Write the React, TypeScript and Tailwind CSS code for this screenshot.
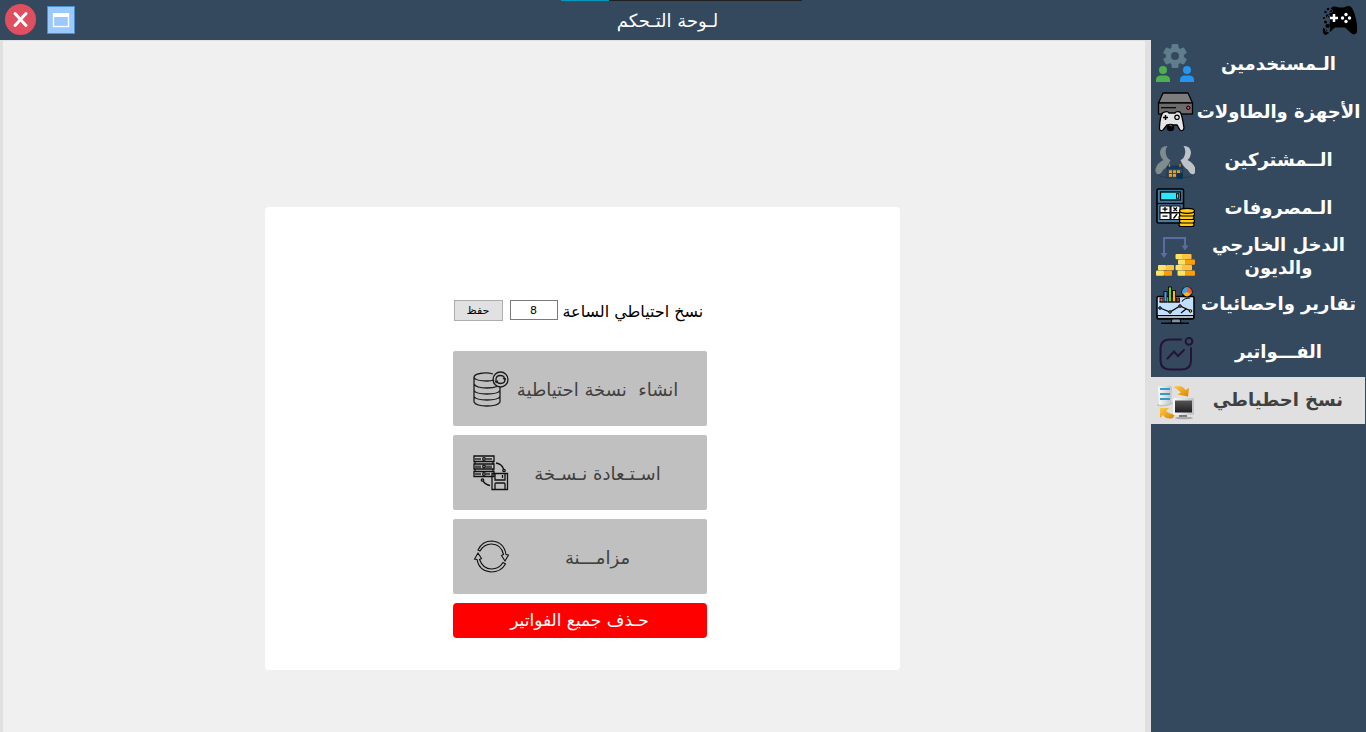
import type { ReactNode } from 'react';

function CloseIcon() {
  return (
    <svg className="size-8" viewBox="0 0 32 32" aria-hidden="true">
      <circle cx="15.5" cy="15.5" r="15.5" fill="#e04f5f" />
      <path d="M10 9.500 21 21.500M21 9.500 10 21.500" stroke="#fff" strokeWidth="3" strokeLinecap="round" />
    </svg>
  );
}

function WindowIcon() {
  return (
    <svg className="size-7" viewBox="0 0 28 28" aria-hidden="true">
      <rect x="0.5" y="0.5" width="27" height="27" fill="#99c9ff" stroke="#4a90d0" />
      <rect x="6.5" y="8" width="15" height="12.5" fill="none" stroke="#fff" strokeWidth="1.4" />
      <rect x="6" y="7" width="16" height="4" fill="#fff" />
    </svg>
  );
}

function GamepadIcon() {
  return (
    <svg className="h-8 w-9" viewBox="0 0 36 32" aria-hidden="true">
      <path d="M9 4C12 1 15 3 17 3.500H21C24 3 27 0 30 4C33 9 36 20 35 28C34 31 31 31 29 29L23 23.500H13L8 28C7 25 9 23 7 21C9 18 7 15 8 12C6 10 9 7 9 4Z" fill="#000" />
      <g fill="#000"><circle cx="6" cy="5" r="1.300" /><circle cx="3.500" cy="8" r="1.200" /><circle cx="5.500" cy="12" r="1.700" /><circle cx="2" cy="14" r="1" /><circle cx="3.500" cy="18" r="1.500" /><circle cx="5.500" cy="22" r="2" /><path d="M1 24 4 25 7 29 4 31Q0 31 1 24" /></g>
      <g fill="none" stroke="#34495e" strokeWidth="0.8"><circle cx="9" cy="7" r="1.600" /><circle cx="7" cy="13" r="1.600" /><circle cx="5" cy="26" r="1.700" /></g>
      <path d="M12 10V18M8 14H16" stroke="#fff" strokeWidth="2.500" />
      <g fill="#fff"><circle cx="24" cy="10.500" r="1.700" /><circle cx="24" cy="17.500" r="1.700" /><circle cx="20.500" cy="14" r="1.700" /><circle cx="27.500" cy="14" r="1.700" /></g>
    </svg>
  );
}

function Icon({ children }: { children: ReactNode }) {
  return (
    <svg className="size-10 shrink-0" viewBox="0 0 40 40" fill="none" aria-hidden="true">
      {children}
    </svg>
  );
}

const usersIcon = (
  <Icon>
    <g fill="#607d8b">
      <rect x="16.500" y="0" width="7" height="24" rx="1.500" />
      <rect x="16.500" y="0" width="7" height="24" rx="1.500" transform="rotate(60 20 12)" />
      <rect x="16.500" y="0" width="7" height="24" rx="1.500" transform="rotate(120 20 12)" />
      <circle cx="20" cy="12" r="9" />
    </g>
    <circle cx="20" cy="12" r="4" fill="#34495e" />
    <g fill="#4caf50"><circle cx="8" cy="26" r="4" /><path d="M1 38V36Q1 31.500 6 31.500H10Q15 31.500 15 36V38Z" /></g>
    <g fill="#2196f3"><circle cx="32" cy="26" r="4" /><path d="M25 38V36Q25 31.500 30 31.500H34Q39 31.500 39 36V38Z" /></g>
  </Icon>
);

const devicesIcon = (
  <Icon>
    <path d="M8 1H33L37.500 11H3.500Z" fill="#7d7d7d" stroke="#000" strokeWidth="1.300" strokeLinejoin="round" />
    <rect x="3.500" y="11" width="34" height="11" fill="#6b6b6b" stroke="#000" strokeWidth="1.300" />
    <path d="M6 15.700H21" stroke="#000" strokeWidth="1.200" />
    <circle cx="33.300" cy="15.800" r="1.700" fill="#e83a62" stroke="#000" />
    <path d="M10 20Q13 19 14 21H20Q21 19 25 20Q27 22 29 36Q28 40 25 38L22 33H12L8 38Q4 40 4.500 35Q5 24 8 20.500Z" fill="#e6e6e6" stroke="#000" strokeWidth="1.300" />
    <path d="M10.500 23V28M8 25.500H13" stroke="#000" strokeWidth="1.500" />
    <circle cx="22" cy="25.300" r="2.200" stroke="#000" strokeWidth="1.200" />
    <circle cx="15.500" cy="35.500" r="3.800" fill="#050505" />
    <path d="M14.500 33.500Q16 32 17 34.500" stroke="#777" />
  </Icon>
);

const personPath = 'M12.500 6Q6 5.500 5 12Q5 17 8.500 20Q2 23 0.500 29Q0 33 3 34.500Q6 34 8 30Q13 27 15.500 20Q12 19 11 14Q10 9 12.500 6Z';

const membersIcon = (
  <Icon>
    <path d={personPath} fill="#7f8c8d" />
    <path d={personPath} fill="#bdc3c7" transform="translate(41 0) scale(-1 1)" />
    <path d="M3 35Q6 37.500 12 37.500H30Q36 37.500 38 35" stroke="#263b52" />
    <rect x="12" y="26" width="15.500" height="12" rx="1" fill="#34495e" stroke="#173a55" />
    <rect x="12" y="26" width="15.500" height="3" fill="#0f3c5c" />
    <path d="M14.500 24V27M25 24V27" stroke="#c97d1b" strokeWidth="1.300" />
    <g fill="#f39c12"><rect x="14" y="30.300" width="3" height="2.800" /><rect x="18" y="30.300" width="3" height="2.800" /><rect x="22" y="30.300" width="3" height="2.800" /><rect x="14" y="34" width="3" height="2.800" /><rect x="18" y="34" width="3" height="2.800" /></g>
    <rect x="21.500" y="33" width="6.500" height="6" rx="1" fill="#063554" />
  </Icon>
);

const expensesIcon = (
  <Icon>
    <rect x="2" y="1" width="26.500" height="34" rx="1.500" fill="#4779a0" stroke="#000" strokeWidth="1.600" />
    <rect x="5.500" y="4" width="20" height="8" fill="#2ee6ff" stroke="#000" strokeWidth="1.300" />
    <rect x="21.500" y="5.700" width="2.300" height="4.500" stroke="#000" />
    <path d="M2 15.500H28" stroke="#000" strokeWidth="1.500" />
    <g fill="#fff" stroke="#000"><rect x="5" y="18" width="10" height="6.500" /><rect x="16" y="18" width="9" height="6.500" /><rect x="5" y="25" width="10" height="6.500" /><rect x="16" y="25" width="9" height="6.500" /></g>
    <path d="M10 19V23.500M7.500 21.200H12.500M18.500 19.500 22 23M22 19.500 18.500 23M7.500 28.200H12.500M22 26 18.500 30.500" stroke="#000" strokeWidth="1.300" />
    <g fill="#ffcb13" stroke="#000" strokeWidth="1.200">
      <rect x="24" y="34.500" width="15" height="4" rx="2" /><rect x="24.500" y="31" width="15" height="4" rx="2" /><rect x="24" y="27.500" width="15" height="4" rx="2" /><rect x="24.500" y="24" width="15" height="4" rx="2" /><ellipse cx="32" cy="22.800" rx="7.500" ry="2.500" />
    </g>
  </Icon>
);

const incomeIcon = (
  <Icon>
    <path d="M9 20V2H30V12" stroke="#596da0" strokeWidth="2" />
    <path d="M5.500 17H12.500L9 22ZM26.500 9.500H33.500L30 14.500Z" fill="#596da0" />
    <g fill="#ffe365"><rect x="20.500" y="18" width="9" height="5.200" rx="1" /><rect x="23" y="23.500" width="8" height="5.200" rx="1" /><rect x="20.500" y="29" width="8" height="5.200" rx="1" /><rect x="22.500" y="34.500" width="8" height="5.200" rx="1" /><rect x="3" y="29" width="8" height="5.200" rx="1" /><rect x="1" y="34.500" width="8" height="5.200" rx="1" /></g>
    <g fill="#ffc344"><rect x="27" y="18" width="9.500" height="5.200" rx="1" /><rect x="11" y="29" width="8" height="5.200" rx="1" /><rect x="27" y="29" width="10" height="5.200" rx="1" /></g>
    <g fill="#ff9d08"><rect x="30" y="23.500" width="10" height="5.200" rx="1" /><rect x="30" y="34.500" width="10" height="5.200" rx="1" /><rect x="9" y="34.500" width="8" height="5.200" rx="1" /></g>
  </Icon>
);

const reportsIcon = (
  <Icon>
    <rect x="2" y="12.500" width="37" height="22.500" rx="1.500" fill="#c1dfff" stroke="#000" strokeWidth="1.500" />
    <path d="M2.500 31.500H38.500V34.500H2.500Z" fill="#a9b6c0" stroke="#000" />
    <g stroke="#000" strokeWidth="0.8"><rect x="5" y="14" width="3" height="4" fill="#e8603c" /><rect x="9" y="7.500" width="3" height="10.500" fill="#4a9bd8" /><rect x="13.500" y="3" width="3" height="15" fill="#74c82a" /><rect x="17.500" y="6.500" width="3" height="11.500" fill="#ffb51b" /><rect x="21.500" y="14" width="3" height="4" fill="#a83c2c" /></g>
    <path d="M4.500 18H25M27 17.500Q29 14 35 14" stroke="#111" strokeWidth="1.200" />
    <circle cx="32" cy="8" r="5" fill="#ffb521" stroke="#000" strokeWidth="1.200" />
    <path d="M32 8V3A5 5 0 0 1 36.500 10Z" fill="#f25932" /><path d="M32 8V3A5 5 0 0 0 27.500 10Z" fill="#40a4df" />
    <path d="M5 24 15 28 25 22 36 27M26 29 31 25" stroke="#000" strokeWidth="1.200" />
    <g stroke="#000"><circle cx="5" cy="24" r="1.300" fill="#3b97d3" /><circle cx="15" cy="28" r="1.300" fill="#80b72f" /><circle cx="25" cy="22" r="1.300" fill="#ff7043" /><circle cx="35.500" cy="27" r="1.300" fill="#ffc02e" /></g>
    <path d="M17 35H25L26 39H16Z" fill="#8193a0" stroke="#000" /><path d="M6 39.300H34" stroke="#000" strokeWidth="1.500" />
  </Icon>
);

const invoicesIcon = (
  <Icon>
    <path d="M26 7.500H15Q5.500 7.500 5.500 17V28Q5.500 37.500 15 37.500H27Q36 37.500 36 28V16" stroke="#251535" strokeWidth="2" strokeLinecap="round" />
    <circle cx="34" cy="9.300" r="3.400" stroke="#251535" strokeWidth="2" />
    <path d="M12.500 26.500 19 19.500 23 24 29 18" stroke="#251535" strokeWidth="2" strokeLinecap="round" />
  </Icon>
);

const backupIcon = (
  <Icon>
    <defs>
      <linearGradient id="screen" x2="0" y2="1"><stop stopColor="#555" /><stop offset="1" stopColor="#211d20" /></linearGradient>
      <linearGradient id="arrow" x2="1" y2="1"><stop stopColor="#ffcb47" /><stop offset="1" stopColor="#dc8300" /></linearGradient>
      <linearGradient id="silver"><stop stopColor="#fafafa" /><stop offset="1" stopColor="#bfc3c5" /></linearGradient>
    </defs>
    <path d="M3 6.500 15 5.500Q17 6 17 8L16 25H4Z" fill="url(#silver)" />
    <path d="M5 9H15M5 14H15M5 19H15" stroke="#349ac8" strokeWidth="2" /><path d="M2 25Q10 27 18 23" stroke="#c4c4c4" strokeWidth="1.500" />
    <path d="M18 7Q27 4 30.500 10L34 8 33 16.500 22.500 14.500 26 12.500Q23 9 18 7Z" fill="url(#arrow)" />
    <path d="M5 28 14 28 11 31Q15 35 20 34L18 38Q11 40 8 35L5 38Z" fill="url(#arrow)" />
    <rect x="18" y="18" width="21" height="17" rx="1.500" fill="url(#silver)" /><rect x="20" y="20.500" width="17" height="12" fill="url(#screen)" />
    <path d="M24 35H32V37H24Z" fill="#777" /><ellipse cx="29" cy="38" rx="9" ry="1.300" fill="#aaa" />
  </Icon>
);

const sections = [
  { label: 'الـمستخدمين', icon: usersIcon },
  { label: 'الأجهزة والطاولات', icon: devicesIcon },
  { label: 'الــمشتركين', icon: membersIcon },
  { label: 'الـمصروفات', icon: expensesIcon },
  { label: 'الدخل الخارجي\nوالديون', icon: incomeIcon },
  { label: 'تقارير واحصائيات', icon: reportsIcon },
  { label: 'الفـــواتير', icon: invoicesIcon },
  { label: 'نسخ احطياطي', icon: backupIcon, active: true },
];

function DatabaseIcon() {
  return (
    <svg className="size-9 shrink-0" viewBox="0 0 36 36" fill="none" stroke="#1b1b1b" strokeWidth="1.3" aria-hidden="true">
      <path d="M20 3Q14 1 7 2.500Q1 3.500 1 6.500Q3 10 14 10Q18 10 21 9M1 6.500V31Q3 35 14 35T27 31V16M1 13Q3 17 14 17Q20 17 24 15.500M1 19.500Q3 23 14 23T27 19.500M1 25.500Q3 29 14 29T27 25.500" />
      <circle cx="27.500" cy="8.500" r="7.500" />
      <path d="M23 9.500Q22.500 4.500 27.500 4.500Q31 4.500 31.500 7.500M32 7.500Q32.500 12.500 27.500 12.500Q24.500 12.500 23.500 10" />
      <path d="M29.500 7H33L32 10ZM21.500 9.500H25.500L23 12.500Z" fill="#1b1b1b" stroke="none" />
    </svg>
  );
}

function RestoreIcon() {
  return (
    <svg className="size-9 shrink-0" viewBox="0 0 36 36" fill="none" stroke="#111" strokeWidth="1.3" aria-hidden="true">
      <path d="M1 1H21V6.500H1ZM1 9H21V14H1ZM1 16.500H21V21.500H1ZM2 6.500V9M20 6.500V9M2 14V16.500M20 14V16.500" />
      <path d="M3 3V5M5 3V5M7 3V5M14 3V5M16 3V5M18 3V5M3 10.500V13M5 10.500V13M7 10.500V13M14 10.500V13M16 10.500V13M18 10.500V13M3 18V20M5 18V20M7 18V20M14 18V20M16 18V20" />
      <circle cx="11" cy="4" r="1.300" /><circle cx="11" cy="11.500" r="1.300" /><circle cx="11" cy="19" r="1.300" />
      <path d="M23 8Q29 9 30.500 14M10 26Q13 30 17 30.500" /><circle cx="31" cy="15.500" r="1.200" /><circle cx="9.500" cy="25" r="1.200" />
      <path d="M19 18.500H34.500V34.500H19ZM22 19V25H32V19M22 34V29Q22 28 23 28H31Q32 28 32 29V34M29.500 20V23" />
    </svg>
  );
}

function SyncIcon() {
  return (
    <svg className="size-9 shrink-0" viewBox="0 0 36 36" fill="none" stroke="#111" strokeWidth="1.1" aria-hidden="true">
      <path d="M5 11Q9 2 19 2Q31 3 33 15.500L35.500 16 32 22 28.500 16.500 30.500 15.500Q28 5 18.500 5Q11 5 7 12Z" />
      <path d="M32.500 25Q28 33 18 33Q6 32 4 20.500L1.500 20 5 14 8.500 19.500 6.500 20.500Q10 30 18.500 30Q26 30 30 23.500Z" />
    </svg>
  );
}

const actions = [
  { label: 'انشاء  نسخة احتياطية', icon: <DatabaseIcon /> },
  { label: 'اسـتـعادة نـسـخة', icon: <RestoreIcon /> },
  { label: 'مزامـــنة', icon: <SyncIcon /> },
];

export default function App() {
  return (
    <div className="flex min-h-screen flex-col bg-[#34495e] font-['DejaVu_Sans',sans-serif]">
      <header className="flex h-10 items-center justify-between px-1 text-white">
        <div className="flex flex-1 items-center gap-[10px] pb-px pl-px">
          <button aria-label="إغلاق"><CloseIcon /></button>
          <button aria-label="نافذة"><WindowIcon /></button>
        </div>
        <div className="flex h-10 flex-col items-center">
          <div className="flex h-px w-[241px]">
            <span className="w-12 bg-[#0099bc]" />
            <span className="flex-1 bg-[#202020]" />
          </div>
          <h1 dir="rtl" className="pr-7 pt-1 text-lg leading-8">لـوحة التـحكم</h1>
        </div>
        <div className="flex flex-1 justify-end pr-1"><GamepadIcon /></div>
      </header>
      <div className="flex flex-1">
        <main className="flex flex-1 items-start justify-center border-t border-l-[3px] border-r-[6px] border-[#e0e0e0] bg-[#f0f0f0] pb-15 pl-4 pt-[166px]">
          <section className="flex w-[635px] flex-col items-center rounded bg-white pb-8 pr-[5px] pt-[93px]">
            <form className="flex w-[254px] items-start pl-px" onSubmit={(e) => e.preventDefault()}>
              <button className="h-[21px] w-[49px] border border-[#adadad] bg-[#e1e1e1] text-[11px] leading-4">حفظ</button>
              <input id="hour" defaultValue="8" className="ml-[7px] h-5 w-12 border border-[#7a7a7a] bg-white text-center text-[11px]" />
              <label htmlFor="hour" dir="rtl" className="ml-[5px] whitespace-nowrap text-base leading-6">نسخ احتياطي الساعة</label>
            </form>
            <div className="mt-[27px] flex w-[254px] flex-col gap-[9px]">
              {actions.map((a) => (
                <button key={a.label} className="flex h-[75px] items-center rounded-xs bg-[#c0c0c0] pl-5 text-lg text-[#404040]">
                  {a.icon}
                  <span dir="rtl" className="flex-1 whitespace-pre pr-5 pt-0.5 text-center">{a.label}</span>
                </button>
              ))}
              <button dir="rtl" className="h-[35px] rounded bg-[#ff0000] text-[17px] text-white">حـذف جميع الفواتير</button>
            </div>
          </section>
        </main>
        <nav className="flex w-[215px] flex-col gap-px pt-px">
          {sections.map((s) => (
            <a
              key={s.label}
              href="#"
              className={`flex h-[47px] items-start py-[3px] pl-1 text-lg leading-[23px] font-bold ${s.active ? 'mr-px bg-[#e0e0e0] text-[#404040]' : 'text-white'}`}
            >
              {s.icon}
              <span dir="rtl" className="-my-1 flex-1 self-center whitespace-pre pb-0.5 pr-1 text-center">{s.label}</span>
            </a>
          ))}
        </nav>
      </div>
    </div>
  );
}
